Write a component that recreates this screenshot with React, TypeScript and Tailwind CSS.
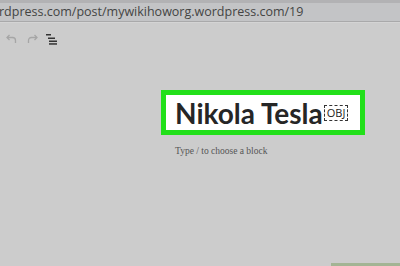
import React from 'react';

const App: React.FC = () => {
  return (
    <div className="w-[400px] h-[266px] overflow-hidden bg-[#cccccc] flex flex-col relative">
      {/* browser address bar */}
      <div className="h-[3px] bg-[#b2b2b4]" />
      <div className="h-[19px] bg-[#c3c4c6] flex items-center border-b border-[#a9a9aa]">
        <span
          className="text-[12.5px] text-[#444] whitespace-nowrap -ml-[1px] leading-none pt-[1px]"
          style={{ fontFamily: '"Open Sans", sans-serif' }}
        >
          rdpress.com/post/mywikihoworg.wordpress.com/19
        </span>
      </div>
      <div className="h-[1px] bg-[#d4d4d4]" />

      {/* editor toolbar */}
      <div className="h-[34px] flex items-center gap-[10px] pl-[6px] pb-[2px]">
        <svg width="11" height="10" viewBox="0 0 11 10" fill="none" stroke="#a6a6a6" strokeWidth="1.3">
          <path d="M3.5 1 L1 3.5 L3.5 6" />
          <path d="M1 3.5 H6.5 C8.5 3.5 9.5 5 9.5 6.5 V9" />
        </svg>
        <svg width="11" height="10" viewBox="0 0 11 10" fill="none" stroke="#a6a6a6" strokeWidth="1.3">
          <path d="M7.5 1 L10 3.5 L7.5 6" />
          <path d="M10 3.5 H4.5 C2.5 3.5 1.5 5 1.5 6.5 V9" />
        </svg>
        <svg width="12" height="11" viewBox="0 0 12 11" fill="#333" className="-ml-[2px]">
          <rect x="0" y="0" width="5" height="1.5" />
          <rect x="2" y="3.5" width="7" height="1.5" />
          <rect x="3" y="6.5" width="8" height="1.5" />
          <rect x="3" y="9.2" width="8" height="1.5" />
        </svg>
      </div>

      {/* content */}
      <div className="flex flex-col pl-[161px] pt-[33px]">
        <div className="w-[204px] h-[45px] border-[5px] border-[#22e01a] bg-white flex items-center pl-[9px] whitespace-nowrap overflow-hidden">
          <span
            className="text-[28px] font-bold text-[#262626] leading-none"
            style={{ fontFamily: 'Lato, sans-serif' }}
          >
            Nikola Tesla
          </span>
          <span
            className="ml-[1px] mt-[1px] border-[1.5px] border-dashed border-[#333] text-[11px] text-[#222] px-[2px] leading-[14px]"
            style={{ fontFamily: '"Open Sans", sans-serif' }}
          >
            OBJ
          </span>
        </div>
        <div
          className="pl-[14px] pt-[9px] text-[9.5px] text-[#555]"
          style={{ fontFamily: '"Liberation Serif", serif' }}
        >
          Type / to choose a block
        </div>
      </div>

      <div className="absolute right-0 bottom-0 w-[69px] h-[3px] bg-[#a3b494]" />
    </div>
  );
};

export default App;
